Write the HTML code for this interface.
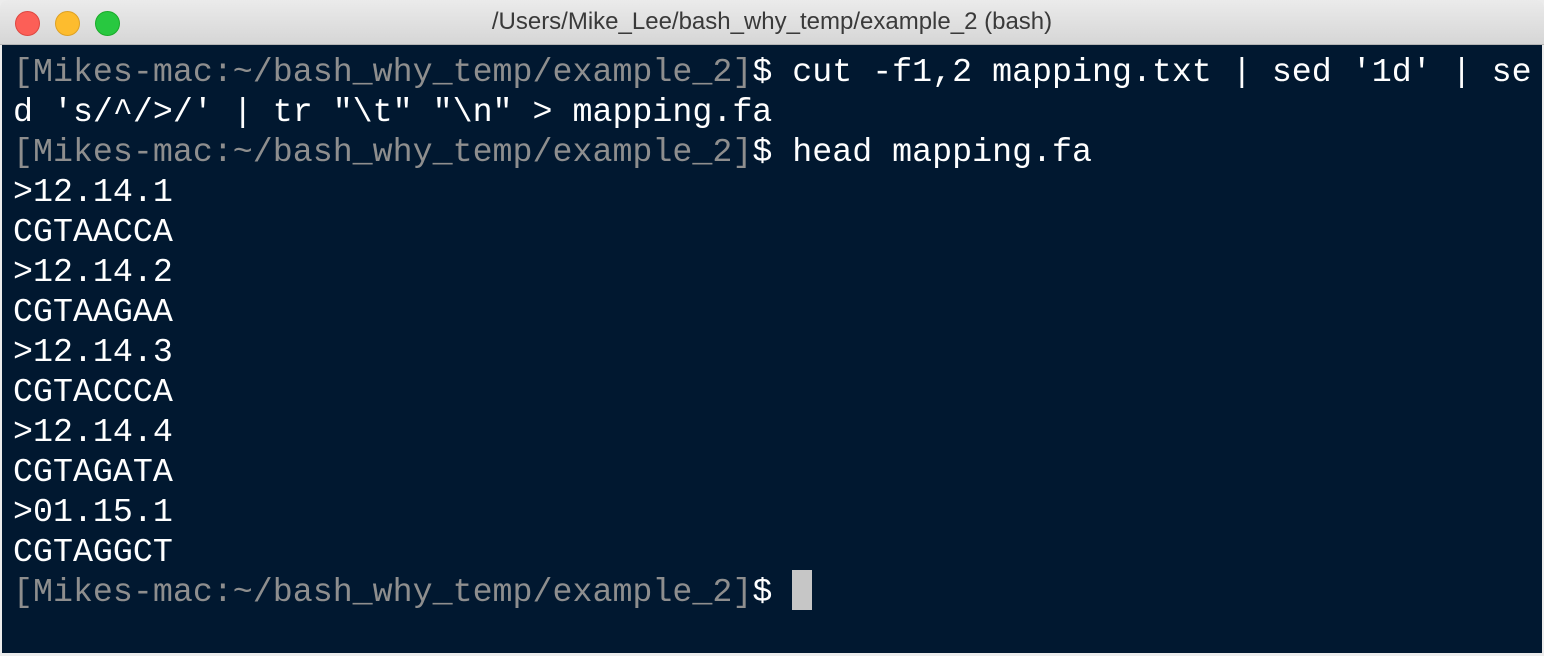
<!DOCTYPE html>
<html><head><meta charset="utf-8"><style>
html,body{margin:0;padding:0;width:1544px;height:656px;overflow:hidden;background:#fff}
.win{position:absolute;left:0;top:0;width:1544px;height:656px;background:#ececec}
.tb{position:absolute;left:0;top:0;width:1544px;height:44px;background:linear-gradient(#ebebeb,#d6d6d6);border-bottom:1px solid #b5b5b5;border-radius:8px 8px 0 0}
.dot{position:absolute;top:11px;width:23px;height:23px;border-radius:50%}
.t{position:absolute;left:0;right:0;top:8px;line-height:30px;text-align:center;font:24px "Liberation Sans",sans-serif;color:#3a3a3a}
.body{position:absolute;left:2px;top:45px;width:1540px;height:608px;background:#011830}
pre{margin:0;position:absolute;left:11px;top:7px;font:33.3px/40px "Liberation Mono",monospace;color:#fff}
.g{color:#8e8e8e}
.cur{position:absolute;left:790px;top:525px;width:20px;height:40px;background:#c6c6c6}
</style></head><body><div class="win">
<div class="tb"><div class="dot" style="left:15px;background:#fc5f57;border:1px solid #de4740"></div><div class="dot" style="left:55px;background:#fdbc2e;border:1px solid #dea123"></div><div class="dot" style="left:95px;background:#28c840;border:1px solid #1aab29"></div><div class="t">/Users/Mike_Lee/bash_why_temp/example_2 (bash)</div></div>
<div class="body"><pre><span class="g">[Mikes-mac:~/bash_why_temp/example_2]</span>$ cut -f1,2 mapping.txt | sed '1d' | se
d 's/^/&gt;/' | tr "\t" "\n" &gt; mapping.fa
<span class="g">[Mikes-mac:~/bash_why_temp/example_2]</span>$ head mapping.fa
&gt;12.14.1
CGTAACCA
&gt;12.14.2
CGTAAGAA
&gt;12.14.3
CGTACCCA
&gt;12.14.4
CGTAGATA
&gt;01.15.1
CGTAGGCT
<span class="g">[Mikes-mac:~/bash_why_temp/example_2]</span>$ </pre><div class="cur"></div></div>
</div></body></html>
